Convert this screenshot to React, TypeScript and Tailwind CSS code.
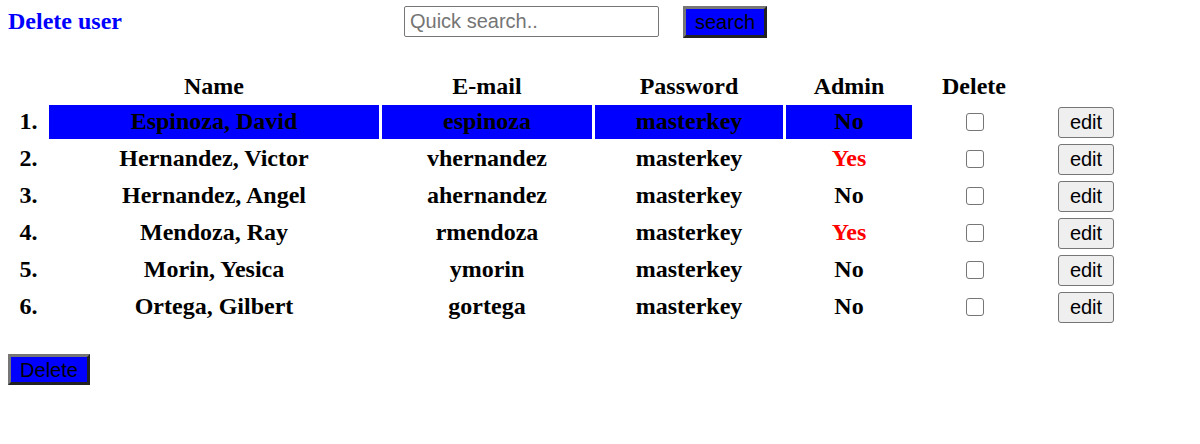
const users = [
    {name: "Espinoza, David", email: "espinoza", password: "masterkey", admin: false, selected: true},
    {name: "Hernandez, Victor", email: "vhernandez", password: "masterkey", admin: true, selected: false},
    {name: "Hernandez, Angel", email: "ahernandez", password: "masterkey", admin: false, selected: false},
    {name: "Mendoza, Ray", email: "rmendoza", password: "masterkey", admin: true, selected: false},
    {name: "Morin, Yesica", email: "ymorin", password: "masterkey", admin: false, selected: false},
    {name: "Ortega, Gilbert", email: "gortega", password: "masterkey", admin: false, selected: false},
];

const serif = "font-['Liberation_Serif','Times_New_Roman',serif]";
const sans = "font-['Liberation_Sans',Arial,sans-serif]";

const outsetBtn =
    "bg-[#0000ff] text-black text-[20px] leading-none border-[3px] border-t-[#767676] border-l-[#767676] border-b-[#222222] border-r-[#222222] flex items-center justify-center";

export default function App() {
    return (
        <div className="min-h-screen bg-white px-2 pt-[6px]">
            {/* Header */}
            <div className="flex items-start">
                <h2 className={`${serif} w-[396px] text-[24px] leading-[28px] font-bold text-[#0000ff] mt-[1px]`}>
                    Delete user
                </h2>
                <input
                    type="text"
                    placeholder="Quick search.."
                    className={`${sans} w-[255px] h-[31px] border border-[#767676] rounded-[2px] px-[5px] text-[20px] text-black placeholder:text-[#757575] outline-none`}
                />
                <button className={`${sans} ${outsetBtn} ml-[24px] w-[84px] h-[32px] pb-[1px]`}>
                    search
                </button>
            </div>

            {/* Users table */}
            <table className={`${serif} mt-[30px] border-separate border-spacing-[3px] text-[24px] leading-[1.15] font-bold text-black`}>
                <thead>
                    <tr>
                        <th className="w-[35px] h-[31px] p-0"></th>
                        <th className="w-[330px] h-[31px] p-0 pt-[1px] text-center align-middle">Name</th>
                        <th className="w-[210px] h-[31px] p-0 pt-[1px] text-center align-middle">E-mail</th>
                        <th className="w-[188px] h-[31px] p-0 pt-[1px] text-center align-middle">Password</th>
                        <th className="w-[126px] h-[31px] p-0 pt-[1px] text-center align-middle">Admin</th>
                        <th className="w-[118px] h-[31px] p-0 pt-[1px] text-center align-middle">Delete</th>
                        <th className="w-[100px] h-[31px] p-0"></th>
                    </tr>
                </thead>
                <tbody>
                    {users.map((user, index) => (
                        <tr key={index}>
                            <td className="h-[34px] p-0 text-center align-middle">{index + 1}.</td>
                            <td className={`h-[34px] p-0 text-center align-middle ${user.selected ? "bg-[#0000ff]" : ""}`}>
                                {user.name}
                            </td>
                            <td className={`h-[34px] p-0 text-center align-middle ${user.selected ? "bg-[#0000ff]" : ""}`}>
                                {user.email}
                            </td>
                            <td className={`h-[34px] p-0 text-center align-middle ${user.selected ? "bg-[#0000ff]" : ""}`}>
                                {user.password}
                            </td>
                            <td
                                className={`h-[34px] p-0 text-center align-middle ${user.selected ? "bg-[#0000ff]" : ""} ${user.admin ? "text-[#ff0000]" : ""}`}
                            >
                                {user.admin ? "Yes" : "No"}
                            </td>
                            <td className="h-[34px] p-0 align-middle">
                                <div className="flex justify-center pl-[2px]">
                                    <input
                                        type="checkbox"
                                        className="appearance-none w-[18px] h-[18px] border border-[#767676] rounded-[3px] bg-white"
                                    />
                                </div>
                            </td>
                            <td className="h-[34px] p-0 align-middle">
                                <div className="flex justify-center">
                                    <button
                                        className={`${sans} w-[56px] h-[31px] bg-[#efefef] border border-[#767676] rounded-[3px] text-[20px] leading-none font-normal text-black`}
                                    >
                                        edit
                                    </button>
                                </div>
                            </td>
                        </tr>
                    ))}
                </tbody>
            </table>

            <button className={`${sans} ${outsetBtn} mt-[27px] w-[82px] h-[31px]`}>
                Delete
            </button>
        </div>
    );
}
